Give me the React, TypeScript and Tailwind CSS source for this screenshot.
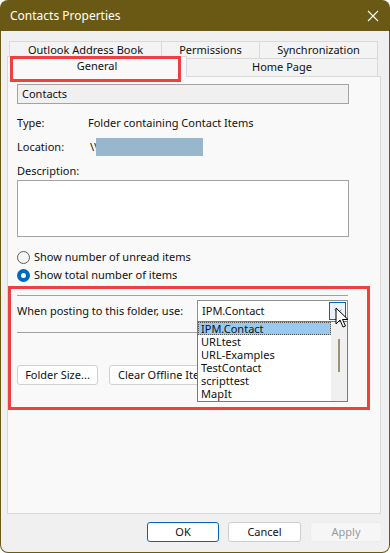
import React from "react";

const font = { fontFamily: '"Noto Sans", "Segoe UI", sans-serif' };

function Radio({ checked, label }: { checked?: boolean; label: string }) {
  return (
    <div className="flex items-center h-[18px]">
      {checked ? (
        <span className="w-[13px] h-[13px] rounded-full bg-[#0067c0] flex items-center justify-center">
          <span className="w-[5px] h-[5px] rounded-full bg-white" />
        </span>
      ) : (
        <span className="w-[13px] h-[13px] rounded-full border border-[#5c5c5c] bg-[#f5f5f5]" />
      )}
      <span className="ml-[4px]">{label}</span>
    </div>
  );
}

function Cursor() {
  return (
    <svg className="absolute left-[137px] top-[6px]" width="14" height="22" viewBox="0 0 14 22">
      <path
        d="M1 1 L1 17 L5 13 L8 20 L10.5 19 L7.5 12.5 L13 12.5 Z"
        fill="#fff"
        stroke="#000"
        strokeWidth="1"
        strokeLinejoin="round"
      />
    </svg>
  );
}

export default function App() {
  const items = ["IPM.Contact", "URLtest", "URL-Examples", "TestContact", "scripttest", "MapIt"];

  return (
    <div className="w-[390px] h-[553px] bg-white text-[11px] text-[#111] select-none" style={font}>
      <div className="w-full h-full rounded-[8px] bg-[#6a5914] p-[1px] flex flex-col">
        {/* Title bar */}
        <div className="h-[30px] flex items-center justify-between pl-[9px] pr-[10px] text-white text-[12px]">
          <span>Contacts Properties</span>
          <svg width="12" height="12" viewBox="0 0 12 12">
            <path d="M1 1 L11 11 M11 1 L1 11" stroke="#fff" strokeWidth="1.1" />
          </svg>
        </div>

        {/* Body */}
        <div className="flex-1 bg-[#f0f0f0] rounded-b-[7px] pl-[6px] flex flex-col">
          {/* Tabs */}
          <div className="relative mt-[10px]">
            <div className="flex ml-[2px] h-[17px]">
              <div className="w-[153px] border border-b-0 border-[#dadada] bg-[#f3f3f3] flex items-center justify-center">
                Outlook Address Book
              </div>
              <div className="w-[98px] border border-b-0 border-l-0 border-[#dadada] bg-[#f3f3f3] flex items-center justify-center">
                Permissions
              </div>
              <div className="w-[118px] border border-b-0 border-l-0 border-[#dadada] bg-[#f3f3f3] flex items-center justify-center">
                Synchronization
              </div>
            </div>
            <div className="flex h-[18px] relative z-10">
              <div className="w-[180px] h-[21px] -mt-[2px] border border-b-0 border-[#dadada] bg-[#f9f9f9] flex items-start pt-[1px] justify-center">
                General
              </div>
              <div className="w-[191px] border border-b-0 border-l-0 border-[#dadada] bg-[#f3f3f3] flex items-center justify-center">
                Home Page
              </div>
            </div>
            <div className="absolute left-[3px] top-[15px] w-[171px] h-[26px] border-[3px] border-[#ee4040] z-20" />
          </div>

          {/* Tab page */}
          <div className="relative w-[374px] h-[438px] border border-[#d9d9d9] bg-[#f9f9f9] pl-[9px] flex flex-col">
            <div className="mt-[7px] w-[332px] h-[20px] border border-[#a3a3a3] bg-[#f0f0f0] flex items-center pl-[4px]">
              Contacts
            </div>

            <div className="mt-[10px] flex items-center h-[18px]">
              <span className="w-[71px]">Type:</span>
              <span>Folder containing Contact Items</span>
            </div>
            <div className="mt-[6px] flex items-center h-[18px]">
              <span className="w-[73px]">Location:</span>
              <span>\\</span>
              <span className="ml-[-2px] w-[107px] h-[18px] bg-[#98b7cc]" />
            </div>
            <div className="mt-[6px] flex items-center h-[18px]">Description:</div>
            <div className="w-[332px] h-[57px] border border-[#a3a3a3] bg-white" />

            <div className="mt-[11px]">
              <Radio label="Show number of unread items" />
              <Radio checked label="Show total number of items" />
            </div>

            <div className="mt-[11px] w-[331px] h-px bg-[#a0a0a0]" />

            <div className="mt-[4px] flex items-center h-[22px]">
              <span className="w-[180px] whitespace-nowrap">When posting to this folder, use:</span>
              <div className="relative w-[151px] h-[22px] border border-[#8f8f8f] bg-white flex items-center pl-[4px] z-10">
                <span>IPM.Contact</span>
                <div className="absolute right-[1px] top-[1px] w-[17px] h-[18px] border border-[#0067c0] bg-[#eaf3fb] flex items-center justify-center">
                  <svg width="8" height="5" viewBox="0 0 8 5">
                    <path d="M0.5 0.5 L4 4 L7.5 0.5" fill="none" stroke="#777" strokeWidth="1" />
                  </svg>
                </div>
                {/* open list */}
                <div className="absolute left-[-1px] top-[20px] w-[151px] h-[81px] border border-[#7a7a7a] bg-white flex">
                  <div className="flex-1 flex flex-col">
                    {items.map((it, i) => (
                      <div
                        key={it}
                        className={
                          i === 0
                            ? "h-[13px] leading-[11px] pl-[2px] bg-[#99c9ef] border border-dotted border-[#555] text-[#111]"
                            : "h-[13px] leading-[13px] pl-[3px]"
                        }
                      >
                        {it}
                      </div>
                    ))}
                  </div>
                  <div className="w-[16px] bg-[#f0f0f0] flex justify-center pt-[17px]">
                    <div className="w-[2px] h-[33px] bg-[#9c9274]" />
                  </div>
                </div>
                <Cursor />
              </div>
            </div>

            <div className="mt-[10px] w-[331px] h-px bg-[#a0a0a0]" />

            <div className="mt-[32px] flex gap-[11px]">
              <div className="w-[81px] h-[20px] border border-[#d0d0d0] rounded-[3px] bg-white flex items-center justify-center">
                Folder Size...
              </div>
              <div className="w-[112px] h-[20px] border border-[#d0d0d0] rounded-[3px] bg-white flex items-center pl-[8px] whitespace-nowrap">
                Clear Offline Items
              </div>
            </div>

            <div className="absolute left-0 top-[209px] w-[362px] h-[124px] border-[3px] border-[#ee4040] pointer-events-none" />
          </div>

          {/* Bottom buttons */}
          <div className="mt-[8px] flex pl-[140px] gap-[9px]">
            <div className="w-[72px] h-[20px] border border-[#0067c0] rounded-[3px] bg-white flex items-center justify-center">
              OK
            </div>
            <div className="w-[73px] h-[20px] border border-[#cfcfcf] rounded-[3px] bg-white flex items-center justify-center">
              Cancel
            </div>
            <div className="w-[72px] h-[20px] border border-[#ececec] rounded-[3px] bg-[#f6f6f6] text-[#9a9a9a] flex items-center justify-center">
              Apply
            </div>
          </div>
        </div>
      </div>
    </div>
  );
}
